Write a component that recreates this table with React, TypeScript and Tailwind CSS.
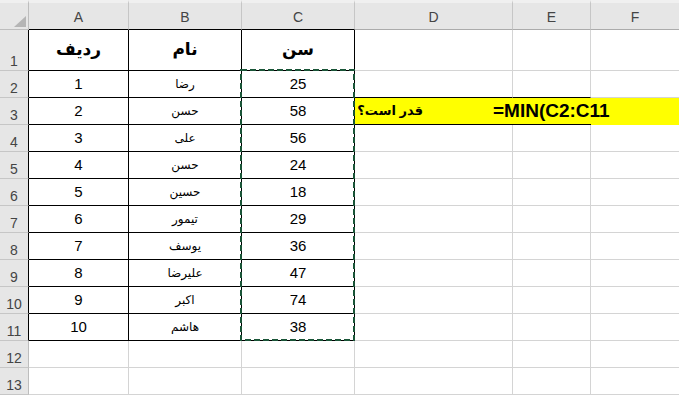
const rows: [number, string, number][] = [
  [1, 'رضا', 25],
  [2, 'حسن', 58],
  [3, 'علی', 56],
  [4, 'حسن', 24],
  [5, 'حسین', 18],
  [6, 'تیمور', 29],
  [7, 'یوسف', 36],
  [8, 'علیرضا', 47],
  [9, 'اکبر', 74],
  [10, 'هاشم', 38],
];

const letters = ['A', 'B', 'C', 'D', 'E', 'F'];

// gray header cell for the row numbers on the left
function RowHead({ n, dark }: { n: number; dark: boolean }) {
  return (
    <div
      className={`flex items-end justify-center pb-[2px] bg-[#e6e6e6] border-b border-b-[#c6c6c6] border-r text-[14px] leading-none text-[#444] ${
        dark ? 'border-r-black' : 'border-r-[#bdbdbd]'
      }`}
    >
      {n}
    </div>
  );
}

function Blank({ last, blackBottom }: { last?: boolean; blackBottom?: boolean }) {
  return (
    <div
      className={`border-b ${blackBottom ? 'border-b-black' : 'border-b-[#d4d4d4]'} ${
        last ? '' : 'border-r border-r-[#d4d4d4]'
      }`}
    />
  );
}

function TableCell({ children, bold }: { children: React.ReactNode; bold?: boolean }) {
  return (
    <div
      className={`flex items-center justify-center border-r border-b border-black ${
        bold ? 'font-bold text-[17px]' : ''
      }`}
    >
      {children}
    </div>
  );
}

export default function App() {
  return (
    <div className="relative h-[395px] w-[679px] overflow-hidden bg-white font-['Liberation_Sans','DejaVu_Sans',sans-serif] text-[15px] text-black">
      <div className="grid grid-cols-[29px_100px_113px_113px_158px_78px_1fr] grid-rows-[30px_41px_repeat(12,27px)]">
        {/* column headers */}
        <div className="relative bg-[#e6e6e6] border-r border-b border-[#bdbdbd] border-t-[3px] border-t-[#f0f0f0]">
          <svg className="absolute right-[2px] bottom-[2px]" width="12" height="11" viewBox="0 0 12 11">
            <polygon points="12,0 12,11 0,11" fill="#b5b5b5" />
          </svg>
        </div>
        {letters.map((l, i) => (
          <div
            key={l}
            className={`flex items-end justify-center pb-[5px] bg-[#e6e6e6] border-t-[3px] border-t-[#f0f0f0] border-b text-[14px] leading-none text-[#444] ${
              i < 3 ? 'border-b-black' : 'border-b-[#ababab]'
            } ${i < 5 ? 'border-r border-r-[#c6c6c6]' : ''}`}
          >
            {l}
          </div>
        ))}

        {/* row 1: table headings */}
        <RowHead n={1} dark />
        <TableCell bold>ردیف</TableCell>
        <TableCell bold>نام</TableCell>
        <TableCell bold>سن</TableCell>
        <Blank />
        <Blank />
        <Blank last />

        {rows.map(([id, name, age], i) => {
          const r = i + 2;
          return (
            <div key={r} className="contents">
              <RowHead n={r} dark />
              <TableCell>{id}</TableCell>
              <TableCell>
                <span className="text-[12px]">{name}</span>
              </TableCell>
              <TableCell>{age}</TableCell>
              {r === 3 ? (
                <div className="col-span-3 flex bg-[#ffff00]">
                  <div className="flex w-[236px] shrink-0 items-center border-b border-black font-bold">
                    <span dir="rtl" className="ml-[4px] w-[64px] shrink-0 whitespace-nowrap text-[13px]">
                      قدر است؟
                    </span>
                    <span className="ml-[70px] shrink-0 whitespace-nowrap text-[19px]">=MIN(C2:C11</span>
                  </div>
                  <div className="flex-1" />
                </div>
              ) : (
                <>
                  <Blank blackBottom={r === 2} />
                  <Blank blackBottom={r === 2} />
                  <Blank last />
                </>
              )}
            </div>
          );
        })}

        {[12, 13].map((r) => (
          <div key={r} className="contents">
            <RowHead n={r} dark={false} />
            <Blank />
            <Blank />
            <Blank />
            <Blank />
            <Blank />
            <Blank last />
          </div>
        ))}
      </div>

      {/* copy marquee around C2:C11 */}
      <svg className="pointer-events-none absolute left-[239px] top-[68px]" width="118" height="275">
        <rect
          x="2"
          y="2"
          width="113"
          height="270"
          fill="none"
          stroke="#1a5538"
          strokeWidth="2"
          strokeDasharray="6 3"
          shapeRendering="crispEdges"
        />
      </svg>
    </div>
  );
}
